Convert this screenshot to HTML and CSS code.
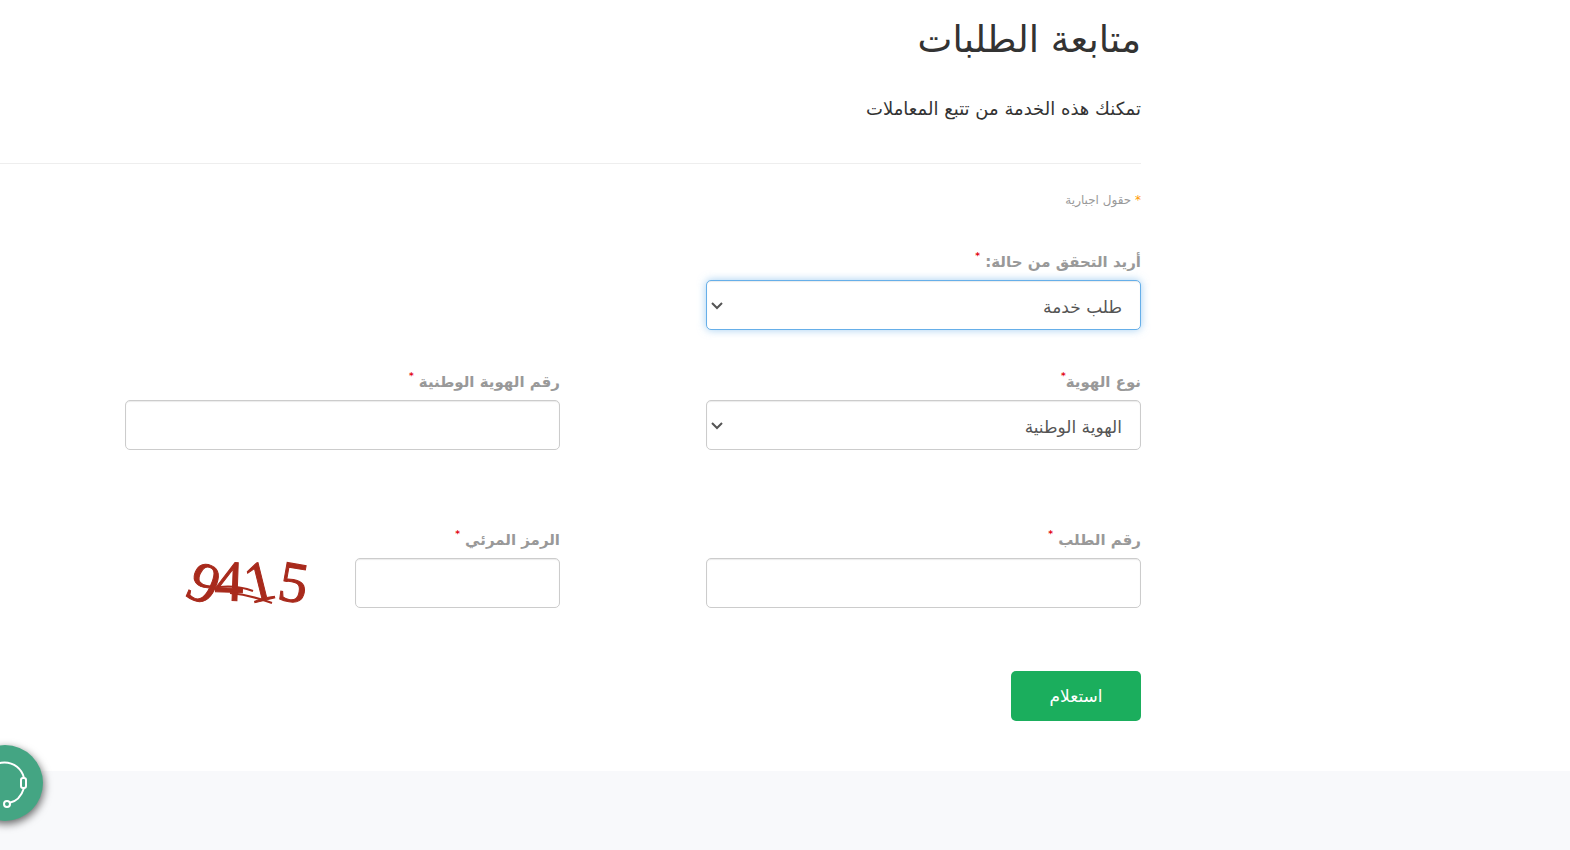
FILE: index.html
```html
<!DOCTYPE html>
<html lang="ar" dir="rtl">
  <head>
    <meta charset="utf-8" />
    <meta name="viewport" content="width=device-width, initial-scale=1.0" />
    <title>متابعة الطلبات</title>
    <link rel="stylesheet" href="styles.css">
  </head>
  <body>
    <main class="page">
      <header class="page-header">
        <h1>متابعة الطلبات</h1>
        <p>تمكنك هذه الخدمة من تتبع المعاملات</p>
      </header>

      <form class="inquiry-form">
        <p class="hint"><span class="star">*</span> حقول اجبارية</p>

        <div class="row">
          <div class="field">
            <label for="check-type">أريد التحقق من حالة: <sup>*</sup></label>
            <div class="select">
              <select id="check-type" autofocus>
                <option>طلب خدمة</option>
              </select>
              <svg viewBox="0 0 12 8"><path d="M1 1l5 5 5-5" /></svg>
            </div>
          </div>
        </div>

        <div class="row">
          <div class="field">
            <label for="id-type">نوع الهوية<sup>*</sup></label>
            <div class="select">
              <select id="id-type">
                <option>الهوية الوطنية</option>
              </select>
              <svg viewBox="0 0 12 8"><path d="M1 1l5 5 5-5" /></svg>
            </div>
          </div>
          <div class="field">
            <label for="id-number">رقم الهوية الوطنية <sup>*</sup></label>
            <input type="text" id="id-number" />
          </div>
        </div>

        <div class="row row-last">
          <div class="field">
            <label for="request-number">رقم الطلب <sup>*</sup></label>
            <input type="text" id="request-number" />
          </div>
          <div class="captcha">
            <div class="field">
              <label for="captcha-code">الرمز المرئي <sup>*</sup></label>
              <input type="text" id="captcha-code" />
            </div>
            <svg class="captcha-image" viewBox="0 0 140 50" direction="ltr">
              <text x="8 39 75 101" y="37 42 46 41" rotate="24 2 -14 10">9415</text>
              <path d="M44 29q18-2 34 4M55 35q20 2 42 10" />
            </svg>
          </div>
        </div>

        <button type="submit" class="submit">استعلام</button>
      </form>
    </main>

    <footer class="footer"></footer>

    <button type="button" class="chat" aria-label="الدعم">
      <svg viewBox="0 0 76 76">
        <path d="M18 33a20 20 0 0 1 39 0M57 43q-4 13-15 15" />
        <rect x="54" y="33" width="5" height="10" rx="2" />
        <rect x="16" y="33" width="5" height="10" rx="2" />
        <circle cx="40" cy="59" r="3" />
      </svg>
    </button>
  </body>
</html>
```

FILE: styles.css
```css
* {
  padding: 0;
  margin: 0;
  box-sizing: border-box;
  font-family: "DejaVu Sans", sans-serif;
}
body {
  min-height: 100vh;
  display: flex;
  flex-direction: column;
  background-color: #ffffff;
  color: #333333;
  overflow-x: hidden;
}
.page {
  margin-right: 429px;
  padding-bottom: 50px;
}
.page-header {
  padding: 10px 0 40px;
  border-bottom: 1px solid #eeeeee;
}
h1 {
  font-size: 37px;
  font-weight: 400;
  line-height: 60px;
  margin-bottom: 24px;
}
.page-header p {
  font-size: 18px;
  line-height: 29px;
}
.inquiry-form {
  padding-left: 125px;
}
.hint {
  padding: 24px 0;
  font-size: 12px;
  line-height: 24px;
  color: #999999;
  margin-bottom: 12px;
}
.star {
  color: #ff9900;
}
.row {
  display: grid;
  grid-template-columns: 1fr 1fr;
  column-gap: 146px;
  margin-bottom: 38px;
}
.row-last {
  margin-top: 76px;
  margin-bottom: 63px;
}
label {
  display: block;
  height: 32px;
  font-size: 15px;
  font-weight: 700;
  line-height: 29px;
  color: #999999;
  white-space: nowrap;
}
sup {
  font-size: 9px;
  line-height: 0;
  vertical-align: 8px;
  color: #e30613;
}
input,
select {
  display: block;
  width: 100%;
  height: 50px;
  padding: 4px 18px 0;
  font-size: 17px;
  color: #555555;
  background-color: #ffffff;
  border: 1px solid #cccccc;
  border-radius: 5px;
  box-shadow: inset 0 1px 1px rgba(0, 0, 0, 0.08);
  outline: none;
  appearance: none;
}
input:focus,
select:focus {
  border-color: #66afe9;
  box-shadow: inset 0 1px 1px rgba(0, 0, 0, 0.08), 0 0 8px rgba(102, 175, 233, 0.6);
}
.select {
  position: relative;
}
.select svg {
  position: absolute;
  left: 5px;
  top: 22px;
  width: 12px;
  height: 8px;
  fill: none;
  stroke: #555555;
  stroke-width: 2;
  pointer-events: none;
}
.captcha {
  display: flex;
  align-items: flex-end;
  gap: 40px;
}
.captcha .field {
  width: 205px;
}
.captcha-image {
  width: 140px;
  height: 50px;
  overflow: visible;
}
.captcha-image text {
  font-family: "Liberation Serif", serif;
  font-size: 58px;
  fill: #a82a1c;
  stroke: #a82a1c;
}
.captcha-image path {
  fill: none;
  stroke: #a82a1c;
  stroke-width: 2;
}
.submit {
  display: block;
  width: 130px;
  height: 50px;
  font-size: 17px;
  color: #ffffff;
  background-color: #1bae5d;
  border: none;
  border-radius: 5px;
  cursor: pointer;
}
.submit:hover {
  background-color: #17984f;
}
.footer {
  flex: 1;
  min-height: 79px;
  background-color: #f8f9fb;
}
.chat {
  position: fixed;
  left: -33px;
  bottom: 29px;
  width: 76px;
  height: 76px;
  border: none;
  border-radius: 50%;
  background-color: #44a583;
  box-shadow: 1px 3px 8px rgba(0, 0, 0, 0.6);
  cursor: pointer;
}
.chat svg {
  display: block;
  fill: none;
  stroke: #ffffff;
  stroke-width: 2;
}
```
